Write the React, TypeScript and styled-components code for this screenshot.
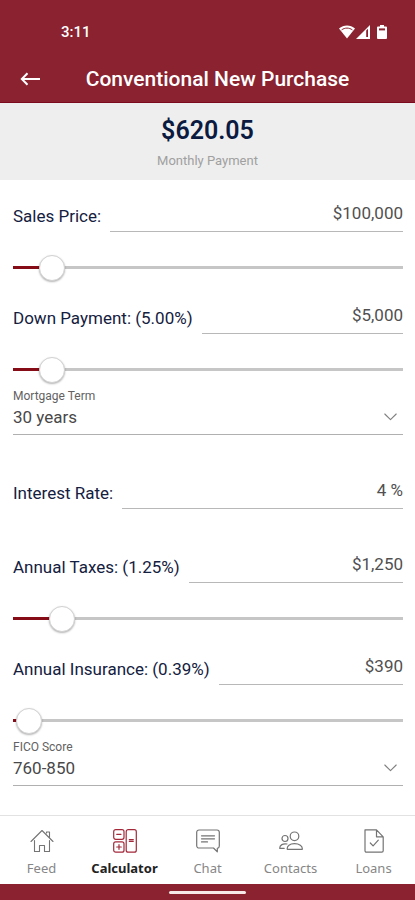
import React, { useId, useState } from "react";
import styled, { createGlobalStyle } from "styled-components";

const GlobalStyle = createGlobalStyle`
  *, *::before, *::after { box-sizing: border-box; }
  body {
    margin: 0;
    background: #ffffff;
    font-family: Roboto, "Liberation Sans", sans-serif;
  }
  button, input, select { font: inherit; }
`;

const Screen = styled.div`
  display: flex;
  flex-direction: column;
  min-height: 100vh;
`;

const TopBar = styled.header`
  background: #8a222f;
  border-bottom: 1px solid #7c0a1e;
  color: #ffffff;
`;

const StatusBar = styled.div`
  display: flex;
  align-items: center;
  justify-content: space-between;
  height: 56px;
  padding: 8px 28px 0 61px;
  font-size: 15px;
  font-weight: 500;
`;

const StatusIcons = styled.div`
  display: flex;
  align-items: center;
  gap: 1px;
`;

const TitleRow = styled.div`
  display: grid;
  grid-template-columns: 60px 1fr 40px;
  align-items: center;
  height: 46px;
`;

const BackButton = styled.button`
  display: flex;
  align-items: center;
  height: 40px;
  padding: 0 0 0 20px;
  border: 0;
  background: none;
  color: inherit;
`;

const Title = styled.h1`
  margin: 0;
  font-size: 21px;
  line-height: 28px;
  font-weight: 500;
  text-align: center;
  white-space: nowrap;
`;

const Summary = styled.section`
  display: flex;
  flex-direction: column;
  align-items: center;
  gap: 7px;
  padding: 13px 0 12px;
  background: #eeeeee;
`;

const Amount = styled.strong`
  color: #0b1a40;
  font-size: 25px;
  line-height: 30px;
  font-weight: 600;
`;

const AmountCaption = styled.span`
  color: #a0a0a0;
  font-size: 13px;
  line-height: 15px;
`;

const Form = styled.main`
  display: flex;
  flex-direction: column;
  flex: 1;
  padding: 16px 12px 28px 13px;
`;

const Group = styled.div<{ $gap: number }>`
  display: flex;
  flex-direction: column;
  margin-bottom: ${(p) => p.$gap}px;
`;

const FieldRow = styled.div`
  display: flex;
  align-items: stretch;
  gap: 9px;
  height: 36px;
`;

const FieldLabel = styled.label`
  padding-top: 10px;
  color: #142040;
  font-size: 17px;
  line-height: 20px;
  white-space: nowrap;
`;

const FieldInput = styled.input`
  flex: 1;
  min-width: 0;
  padding: 0 0 2px;
  border: 0;
  border-bottom: 1px solid #b8b8b8;
  border-radius: 0;
  outline: none;
  background: transparent;
  color: #505050;
  font-size: 17px;
  text-align: right;
`;

const Slider = styled.input`
  appearance: none;
  width: calc(100% + 26px);
  height: 27px;
  margin: 22px -13px 0;
  outline: none;
  background:
    linear-gradient(#860c18, #860c18) 13px 50% / calc((100% - 26px) * var(--fill)) 3px no-repeat,
    linear-gradient(#c6c6c6, #c6c6c6) 13px 50% / calc(100% - 26px) 3px no-repeat;

  &::-webkit-slider-thumb {
    appearance: none;
    width: 26px;
    height: 26px;
    border: 1px solid #d2d2d2;
    border-radius: 50%;
    background: #ffffff;
    box-shadow: 0 1px 2px rgba(0, 0, 0, 0.3);
  }
`;

const SelectBlock = styled.div`
  display: flex;
  flex-direction: column;
  height: 52px;
  border-bottom: 1px solid #b0b0b0;
`;

const SelectLabel = styled.label`
  padding-top: 6px;
  color: #626262;
  font-size: 12px;
  line-height: 14px;
`;

const SelectRow = styled.div`
  display: grid;
  align-items: center;
  height: 28px;

  > * { grid-area: 1 / 1; }
  > svg { justify-self: end; margin-right: 6px; pointer-events: none; }
`;

const Select = styled.select`
  appearance: none;
  width: 100%;
  padding: 0;
  border: 0;
  outline: none;
  background: transparent;
  color: #484848;
  font-size: 17px;
`;

const Nav = styled.nav`
  display: grid;
  grid-template-columns: repeat(5, 1fr);
  height: 69px;
  border-top: 1px solid #e2e2e2;
  background: #ffffff;
`;

const NavLink = styled.a<{ $active: boolean }>`
  display: flex;
  flex-direction: column;
  align-items: center;
  gap: 6px;
  padding-top: 13px;
  color: ${(p) => (p.$active ? "#222222" : "#868686")};
  font-family: "Noto Sans", sans-serif;
  font-size: 13px;
  line-height: 18px;
  font-weight: ${(p) => (p.$active ? 700 : 400)};
  text-decoration: none;

  svg { color: ${(p) => (p.$active ? "#a3293a" : "#747474")}; }
`;

const HomeBar = styled.footer`
  display: flex;
  align-items: center;
  justify-content: center;
  height: 16px;
  background: #8a222f;
`;

const HomePill = styled.div`
  width: 77px;
  height: 3px;
  border-radius: 2px;
  background: #f6e8e8;
`;

const stroke = { fill: "none", stroke: "currentColor", strokeLinecap: "round", strokeLinejoin: "round" } as const;

const WifiIcon = () => (
  <svg width="16" height="14" viewBox="0 0 16 14" aria-hidden="true">
    <path d="M0 3.6C4.6-.5 11.4-.5 16 3.6L8 13.5z" fill="#fff" />
    <path d="M2.6 4.9C5.8 2.5 10.2 2.5 13.4 4.9" fill="none" stroke="#8a222f" strokeWidth="1" />
  </svg>
);

const SignalIcon = () => (
  <svg width="14" height="14" viewBox="0 0 14 14" aria-hidden="true">
    <path d="M14 0v14H0z" fill="#fff" />
    <path d="M10.2 5.6l1.8-1.8v8.2h-1.8z" fill="#8a222f" />
  </svg>
);

const BatteryIcon = () => (
  <svg width="16" height="14" viewBox="0 0 16 14" aria-hidden="true">
    <path d="M9 0h4v1.6h2a1 1 0 0 1 1 1V13a1 1 0 0 1-1 1H7a1 1 0 0 1-1-1V2.600a1 1 0 0 1 1-1h2z" fill="#fff" />
    <path d="M8 3.400h6v2H8z" fill="#8a222f" />
  </svg>
);

const BackIcon = () => (
  <svg width="20" height="14" viewBox="0 0 20 14" {...stroke} strokeWidth="2" strokeLinecap="butt" strokeLinejoin="miter" aria-hidden="true">
    <path d="M20 7H2.400M7.500 1.200L1.800 7l5.700 5.800" />
  </svg>
);

const ChevronIcon = () => (
  <svg width="13" height="8" viewBox="0 0 13 8" {...stroke} strokeWidth="1.1" stroke="#808080" aria-hidden="true">
    <path d="M.8 1l5.700 5.700L12.200 1" />
  </svg>
);

const FeedIcon = () => (
  <svg width="24" height="24" viewBox="0 0 24 24" {...stroke} strokeWidth="1.1" aria-hidden="true">
    <path d="M1 12.500L12 1.500l11 11M4.500 11.500v11h5v-6h5v6h5v-11M16.500 4V3h3v5.500" />
  </svg>
);

const CalculatorIcon = () => (
  <svg width="24" height="24" viewBox="0 0 24 24" {...stroke} strokeWidth="1.2" aria-hidden="true">
    <rect x=".7" y=".7" width="10.3" height="9.6" rx="2" />
    <rect x=".7" y="12.8" width="10.3" height="10.4" rx="2" />
    <rect x="13.2" y=".7" width="10.1" height="22.5" rx="2" />
    <path d="M3.700 5.300h4.300M3.700 18h4.600M6 15.700v4.600M16.300 10.700h4M16.300 12.300h4" />
  </svg>
);

const ChatIcon = () => (
  <svg width="24" height="24" viewBox="0 0 24 24" {...stroke} strokeWidth="1.2" aria-hidden="true">
    <path d="M3 1h18a2.300 2.300 0 0 1 2.300 2.300V17a2.300 2.300 0 0 1-2 2.300v3.500L17.500 19H3a2.300 2.300 0 0 1-2.300-2.300V3.300A2.300 2.300 0 0 1 3 1z" />
    <path d="M5.500 6.800h13M5.500 9.800h13M5.500 12.900h6" />
  </svg>
);

const ContactsIcon = () => (
  <svg width="24" height="24" viewBox="0 0 24 24" {...stroke} strokeWidth="1.2" aria-hidden="true">
    <circle cx="15.5" cy="7.3" r="4.3" />
    <circle cx="6" cy="9.5" r="3" />
    <path d="M8.300 20.300c-.6-3.400 2.500-5.600 7.200-5.600s8.200 2.200 7.800 5.600zM8 15c-4-.8-7.300 1-7.300 4.300h4.500" />
  </svg>
);

const LoansIcon = () => (
  <svg width="24" height="24" viewBox="0 0 24 24" {...stroke} strokeWidth="1.2" aria-hidden="true">
    <path d="M3 .8h11.500l6.700 7v14a1.400 1.400 0 0 1-1.400 1.400H4.400A1.400 1.400 0 0 1 3 21.800zM14.500.8v7h6.700M8.300 14l2.800 2.800 5.200-5.600" />
  </svg>
);

type AmountFieldProps = { label: string; initial: string; slider?: number; gap: number };

function AmountField({ label, initial, slider, gap }: AmountFieldProps) {
  const id = useId();
  const [value, setValue] = useState(initial);
  const [position, setPosition] = useState(slider ?? 0);
  return (
    <Group $gap={gap}>
      <FieldRow>
        <FieldLabel htmlFor={id}>{label}</FieldLabel>
        <FieldInput id={id} type="text" value={value} onChange={(e) => setValue(e.target.value)} />
      </FieldRow>
      {slider !== undefined && (
        <Slider
          type="range"
          min={0}
          max={100}
          step={0.5}
          value={position}
          aria-label={label}
          style={{ "--fill": position / 100 } as React.CSSProperties}
          onChange={(e) => setPosition(Number(e.target.value))}
        />
      )}
    </Group>
  );
}

function SelectField({ label, options, gap }: { label: string; options: string[]; gap: number }) {
  const id = useId();
  return (
    <Group $gap={gap}>
      <SelectBlock>
        <SelectLabel htmlFor={id}>{label}</SelectLabel>
        <SelectRow>
          <Select id={id}>
            {options.map((option) => (
              <option key={option}>{option}</option>
            ))}
          </Select>
          <ChevronIcon />
        </SelectRow>
      </SelectBlock>
    </Group>
  );
}

const tabs = [
  { name: "Feed", Icon: FeedIcon },
  { name: "Calculator", Icon: CalculatorIcon },
  { name: "Chat", Icon: ChatIcon },
  { name: "Contacts", Icon: ContactsIcon },
  { name: "Loans", Icon: LoansIcon },
];

export default function App() {
  return (
    <Screen>
      <GlobalStyle />
      <TopBar>
        <StatusBar>
          <span>3:11</span>
          <StatusIcons>
            <WifiIcon />
            <SignalIcon />
            <BatteryIcon />
          </StatusIcons>
        </StatusBar>
        <TitleRow>
          <BackButton type="button" aria-label="Back">
            <BackIcon />
          </BackButton>
          <Title>Conventional New Purchase</Title>
        </TitleRow>
      </TopBar>
      <Summary>
        <Amount>$620.05</Amount>
        <AmountCaption>Monthly Payment</AmountCaption>
      </Summary>
      <Form>
        <AmountField label="Sales Price:" initial="$100,000" slider={10} gap={17} />
        <AmountField label="Down Payment: (5.00%)" initial="$5,000" slider={10} gap={0} />
        <SelectField label="Mortgage Term" options={["30 years"]} gap={38} />
        <AmountField label="Interest Rate:" initial="4 %" gap={38} />
        <AmountField label="Annual Taxes: (1.25%)" initial="$1,250" slider={12.5} gap={17} />
        <AmountField label="Annual Insurance: (0.39%)" initial="$390" slider={4} gap={0} />
        <SelectField label="FICO Score" options={["760-850"]} gap={0} />
      </Form>
      <Nav>
        {tabs.map(({ name, Icon }) => (
          <NavLink key={name} href={`#${name.toLowerCase()}`} $active={name === "Calculator"}>
            <Icon />
            {name}
          </NavLink>
        ))}
      </Nav>
      <HomeBar>
        <HomePill />
      </HomeBar>
    </Screen>
  );
}
